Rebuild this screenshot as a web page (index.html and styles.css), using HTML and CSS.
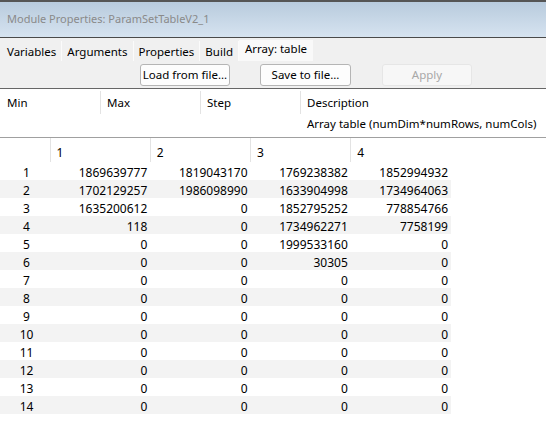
FILE: index.html
```html
<!DOCTYPE html>
<html lang="en">
<head>
    <meta charset="UTF-8">
    <title>Module Properties: ParamSetTableV2_1</title>
    <link rel="stylesheet" href="styles.css">
</head>
<body>
    <div class="window">
        <div class="titlebar">Module Properties: ParamSetTableV2_1</div>

        <div class="tabs">
            <div class="tab">Variables</div>
            <div class="tab">Arguments</div>
            <div class="tab">Properties</div>
            <div class="tab">Build</div>
            <div class="tab active">Array: table</div>
        </div>

        <div class="toolbar">
            <button class="btn btn-load">Load from file...</button>
            <button class="btn btn-save">Save to file...</button>
            <button class="btn btn-apply" disabled>Apply</button>
        </div>

        <div class="props">
            <div class="props-head">
                <div class="cell">Min</div>
                <div class="cell">Max</div>
                <div class="cell">Step</div>
                <div class="cell">Description</div>
            </div>
            <div class="props-row">
                <div class="cell"></div>
                <div class="cell"></div>
                <div class="cell"></div>
                <div class="cell">Array table (numDim*numRows, numCols)</div>
            </div>
        </div>

        <table class="grid">
            <thead>
                <tr>
                    <th class="corner"></th>
                    <th>1</th>
                    <th>2</th>
                    <th>3</th>
                    <th>4</th>
                </tr>
            </thead>
            <tbody>
                <tr><td class="rownum">1</td><td>1869639777</td><td>1819043170</td><td>1769238382</td><td>1852994932</td></tr>
                <tr><td class="rownum">2</td><td>1702129257</td><td>1986098990</td><td>1633904998</td><td>1734964063</td></tr>
                <tr><td class="rownum">3</td><td>1635200612</td><td>0</td><td>1852795252</td><td>778854766</td></tr>
                <tr><td class="rownum">4</td><td>118</td><td>0</td><td>1734962271</td><td>7758199</td></tr>
                <tr><td class="rownum">5</td><td>0</td><td>0</td><td>1999533160</td><td>0</td></tr>
                <tr><td class="rownum">6</td><td>0</td><td>0</td><td>30305</td><td>0</td></tr>
                <tr><td class="rownum">7</td><td>0</td><td>0</td><td>0</td><td>0</td></tr>
                <tr><td class="rownum">8</td><td>0</td><td>0</td><td>0</td><td>0</td></tr>
                <tr><td class="rownum">9</td><td>0</td><td>0</td><td>0</td><td>0</td></tr>
                <tr><td class="rownum">10</td><td>0</td><td>0</td><td>0</td><td>0</td></tr>
                <tr><td class="rownum">11</td><td>0</td><td>0</td><td>0</td><td>0</td></tr>
                <tr><td class="rownum">12</td><td>0</td><td>0</td><td>0</td><td>0</td></tr>
                <tr><td class="rownum">13</td><td>0</td><td>0</td><td>0</td><td>0</td></tr>
                <tr><td class="rownum">14</td><td>0</td><td>0</td><td>0</td><td>0</td></tr>
            </tbody>
        </table>
    </div>
</body>
</html>
```

FILE: styles.css
```css
* {
    margin: 0;
    padding: 0;
    box-sizing: border-box;
}

body {
    font-family: 'Noto Sans', 'Liberation Sans', Arial, sans-serif;
    font-size: 11.5px;
    color: #000;
    background: #fff;
}

.window {
    width: 546px;
    min-height: 430px;
    background: #fff;
}

/* title bar */
.titlebar {
    height: 38px;
    border-top: 2px solid #555;
    border-bottom: 1px solid #4a4a4a;
    background: linear-gradient(180deg, #b8cbdd 0%, #d6e3f0 100%);
    color: #8a8a8a;
    font-size: 11px;
    padding-left: 7px;
    line-height: 34px;
    white-space: nowrap;
}

/* tabs */
.tabs {
    display: flex;
    align-items: flex-end;
    height: 23px;
    padding-left: 2px;
    background: #f0f0f0;
}

.tab {
    height: 20px;
    line-height: 21px;
    padding: 0 5px;
    border-right: 1px solid #fbfbfb;
    background: #f0f0f0;
    white-space: nowrap;
}

.tab.active {
    height: 21px;
    line-height: 18px;
    padding: 0 6px;
    background: #f9f9f9;
    border-right: none;
}

/* buttons */
.toolbar {
    display: flex;
    align-items: center;
    height: 28px;
    padding-left: 140px;
    background: #f0f0f0;
    border-bottom: 1px solid #666;
}

.btn {
    height: 22px;
    font-family: inherit;
    font-size: 11.5px;
    color: #000;
    background: #fdfdfd;
    border: 1px solid #b5b5b5;
    border-radius: 3px;
}

.btn-load {
    width: 90px;
}

.btn-save {
    width: 91px;
    margin-left: 30px;
}

.btn-apply {
    width: 90px;
    margin-left: 31px;
    color: #a8a8a8;
    background: #f7f7f7;
    border-color: #e6e6e6;
}

/* property header */
.props {
    height: 49px;
    border-bottom: 1px solid #a0a0a0;
}

.props-head,
.props-row {
    display: grid;
    grid-template-columns: 100px 100px 100px 1fr;
}

.props-head {
    height: 25px;
    padding-top: 2px;
}

.props-head .cell {
    line-height: 23px;
    padding-left: 7px;
}

.props-head .cell + .cell {
    border-left: 1px solid #e3e3e3;
    padding-left: 6px;
}

.props-row .cell {
    line-height: 20px;
    padding-left: 7px;
    white-space: nowrap;
}

/* data grid */
.grid {
    border-collapse: collapse;
    table-layout: fixed;
    width: 451px;
    font-size: 12px;
}

.grid th {
    width: 100px;
    height: 24px;
    padding: 4px 0 0 6px;
    font-weight: normal;
    text-align: left;
    vertical-align: middle;
    border-left: 1px solid #e3e3e3;
}

.grid th.corner {
    width: 50px;
    border-left: none;
}

.grid td {
    height: 18px;
    padding: 3px 3px 0 0;
    line-height: 15px;
    text-align: right;
}

.grid td.rownum {
    text-align: center;
    padding: 3px 0 0 3px;
}

.grid tbody tr:nth-child(even) td {
    background: #f3f3f3;
}
```
